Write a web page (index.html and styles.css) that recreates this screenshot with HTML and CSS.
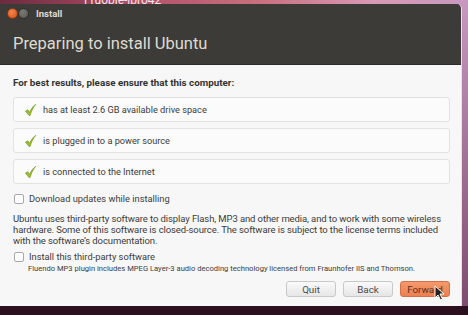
FILE: index.html
```html
<!DOCTYPE html>
<html lang="en">
<head>
  <meta charset="UTF-8" />
  <title>Install</title>
  <link rel="stylesheet" href="styles.css">
</head>
<body>
  <div class="desktop">
    <div class="host">Fruobie-lbro42</div>
    <div class="window">
      <div class="titlebar">
        <div class="title-row">
          <span class="wbtn close"></span>
          <span class="wbtn min"></span>
          <span class="wtitle">Install</span>
        </div>
        <h1>Preparing to install Ubuntu</h1>
      </div>
      <div class="content">
        <p class="lead">For best results, please ensure that this computer:</p>
        <ul class="checks">
          <li>
            <svg class="tick" width="13" height="14" viewBox="0 0 14 14"><path d="M1.5 8.2 L4.3 6.8 L6 9.6 C7.5 6 9.6 3 12.8 0.8 C10.2 3.8 8.2 7.4 6.6 12.8 L5.4 13 Z" fill="#9bbf2e" stroke="#6f8f18" stroke-width="0.6"/></svg>
            has at least 2.6 GB available drive space
          </li>
          <li>
            <svg class="tick" width="13" height="14" viewBox="0 0 14 14"><path d="M1.5 8.2 L4.3 6.8 L6 9.6 C7.5 6 9.6 3 12.8 0.8 C10.2 3.8 8.2 7.4 6.6 12.8 L5.4 13 Z" fill="#9bbf2e" stroke="#6f8f18" stroke-width="0.6"/></svg>
            is plugged in to a power source
          </li>
          <li>
            <svg class="tick" width="13" height="14" viewBox="0 0 14 14"><path d="M1.5 8.2 L4.3 6.8 L6 9.6 C7.5 6 9.6 3 12.8 0.8 C10.2 3.8 8.2 7.4 6.6 12.8 L5.4 13 Z" fill="#9bbf2e" stroke="#6f8f18" stroke-width="0.6"/></svg>
            is connected to the Internet
          </li>
        </ul>
        <label class="opt first"><span class="box"></span>Download updates while installing</label>
        <p class="info">Ubuntu uses third-party software to display Flash, MP3 and other media, and to work with some wireless hardware. Some of this software is closed-source. The software is subject to the license terms included with the software’s documentation.</p>
        <label class="opt"><span class="box"></span>Install this third-party software</label>
        <p class="small">Fluendo MP3 plugin includes MPEG Layer-3 audio decoding technology licensed from Fraunhofer IIS and Thomson.</p>
        <div class="actions">
          <button class="btn">Quit</button>
          <button class="btn">Back</button>
          <button class="btn primary">Forward
            <svg class="cursor" width="11" height="16" viewBox="0 0 11 16"><path d="M1 1 L1 13 L4 10 L6.5 15 L8.5 14 L6 9 L10 9 Z" fill="#222" stroke="#fff" stroke-width="1"/></svg>
          </button>
        </div>
      </div>
    </div>
    <div class="dock"></div>
  </div>
</body>
</html>
```

FILE: styles.css
```css
html, body {
  margin: 0;
  padding: 0;
  height: 100%;
  overflow: hidden;
}
body {
  font-family: Roboto, "DejaVu Sans", sans-serif;
  background:
    linear-gradient(180deg, rgba(60, 10, 40, 0) 0%, rgba(60, 10, 40, 0.55) 100%),
    linear-gradient(90deg, #6a2c3e 0%, #b4506a 30%, #c8707e 55%, #d89ab6 80%, #c898c0 100%);
}
.desktop {
  position: relative;
  width: 468px;
  height: 315px;
  display: flex;
  flex-direction: column;
}
.host {
  position: absolute;
  top: -7px;
  left: 84px;
  color: #f2e6ea;
  font-size: 12px;
}
.window {
  margin-top: 4px;
  width: 462px;
  height: 302px;
  display: flex;
  flex-direction: column;
  border-top-right-radius: 5px;
  overflow: hidden;
  border-right: 1px solid #ecdfe6;
  box-sizing: border-box;
}
.titlebar {
  background: #3c3b37;
  height: 61px;
  padding: 0 13px;
  box-sizing: border-box;
  border-bottom: 1px solid #2c2b28;
}
.title-row {
  display: flex;
  align-items: center;
  height: 19px;
}
.wbtn {
  width: 9px;
  height: 9px;
  border-radius: 50%;
  display: inline-block;
}
.close {
  margin-left: -6px;
  background: radial-gradient(circle at 40% 35%, #f6864a, #d44d18);
  border: 1px solid #8a3a18;
}
.min {
  background: radial-gradient(circle at 40% 35%, #7d7b76, #55534f);
  border: 1px solid #2f2e2b;
}
.wtitle {
  margin-left: 7px;
  color: #dfdbd2;
  font-size: 9.5px;
  font-weight: bold;
}
h1 {
  margin: 11px 0 0;
  color: #dfdbd2;
  font-size: 16.5px;
  line-height: 20px;
  font-weight: normal;
}
.content {
  flex: 1;
  background: #f7f7f7;
  padding: 12px 11px 0 13px;
  display: flex;
  flex-direction: column;
  color: #3c3c3c;
}
.lead {
  margin: 0 0 8px;
  font-weight: bold;
  font-size: 9.8px;
  line-height: 12px;
  color: #333;
}
.checks {
  list-style: none;
  margin: 0;
  padding: 0;
  display: flex;
  flex-direction: column;
  gap: 6px;
}
.checks li {
  height: 25px;
  box-sizing: border-box;
  border: 1px solid #e2e2e2;
  border-radius: 3px;
  background: #fbfbfb;
  display: flex;
  align-items: center;
  padding-left: 10px;
  font-size: 9.2px;
  color: #3c3c3c;
}
.tick {
  margin-right: 6px;
}
.opt {
  display: flex;
  align-items: center;
  font-size: 9.3px;
  line-height: 12px;
  margin-top: 5px;
  color: #3c3c3c;
}
.opt.first {
  margin-top: 9px;
}
.box {
  width: 8px;
  height: 8px;
  border: 1px solid #a8a8a8;
  border-radius: 2px;
  background: #fdfdfd;
  margin: 0 5px 0 1px;
}
.info {
  margin: 8px 0 0;
  font-size: 9.5px;
  letter-spacing: -0.1px;
  line-height: 11px;
  color: #3c3c3c;
}
.small {
  margin: 1px 0 0 15px;
  font-size: 7.6px;
  line-height: 10px;
  color: #3c3c3c;
}
.actions {
  display: flex;
  justify-content: flex-end;
  gap: 7px;
  margin-top: 7px;
}
.btn {
  position: relative;
  width: 50px;
  height: 16px;
  font-family: inherit;
  font-size: 9.8px;
  color: #4a4a4a;
  border: 1px solid #c8c8c8;
  border-radius: 3px;
  background: linear-gradient(#fafafa, #e6e6e6);
  padding: 0;
}
.primary {
  background: linear-gradient(#f5996c, #ec8050);
  border-color: #d47048;
  color: #5a3020;
}
.cursor {
  position: absolute;
  left: 33px;
  top: 3px;
}
.dock {
  flex: 1;
  background: #2c1020;
}
```
